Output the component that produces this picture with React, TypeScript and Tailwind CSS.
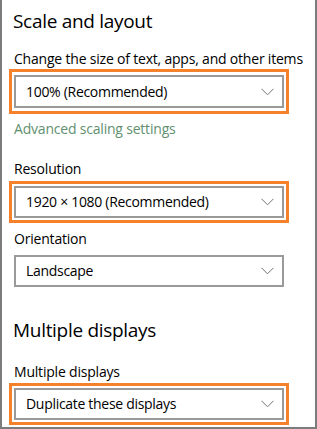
import React from "react";

function Chevron() {
  return (
    <svg width="13" height="8" viewBox="0 0 13 8" className="shrink-0">
      <path d="M0.5 0.8 L6.5 6.8 L12.5 0.8" fill="none" stroke="#737373" strokeWidth="1" />
    </svg>
  );
}

function Dropdown({ value, tall }: { value: string; tall?: boolean }) {
  return (
    <div
      className={`flex items-center justify-between w-[270px] border-2 border-[#9a9a9a] bg-white pl-[10px] pr-[8px] ${
        tall ? "h-[33px]" : "h-[32px]"
      }`}
    >
      <span className="text-[14px] leading-none tracking-[-0.3px] text-black">{value}</span>
      <Chevron />
    </div>
  );
}

function Highlight({ children, tall }: { children: React.ReactNode; tall?: boolean }) {
  return (
    <div className={`w-[280px] border-[3px] border-[#f5822a] px-[2px] ${tall ? "py-[3px]" : "py-[2px]"}`}>
      {children}
    </div>
  );
}

export default function App() {
  return (
    <div className="w-[317px] h-[429px] overflow-hidden bg-white border-l-2 border-r-2 border-b-2 border-[#7c7c7c] pl-[7px] font-['Open_Sans','Noto_Sans',sans-serif] text-black">
      <h2 className="mt-[7px] pl-[4px] text-[19px] leading-[28px] tracking-[-0.3px] font-normal">Scale and layout</h2>

      <p className="mt-[14px] pl-[5px] text-[14px] leading-[20px] tracking-[-0.2px]">
        Change the size of text, apps, and other items
      </p>
      <Highlight tall>
        <Dropdown value="100% (Recommended)" tall />
      </Highlight>

      <p className="mt-[5px] pl-[5px] text-[14px] leading-[20px] tracking-[-0.2px] text-[#62906f]">
        Advanced scaling settings
      </p>

      <p className="mt-[20px] pl-[5px] text-[14px] leading-[20px] tracking-[-0.2px]">Resolution</p>
      <div className="mt-[2px]">
        <Highlight>
          <Dropdown value="1920 × 1080 (Recommended)" />
        </Highlight>
      </div>

      <p className="mt-[6px] pl-[5px] text-[14px] leading-[20px] tracking-[-0.2px]">Orientation</p>
      <div className="mt-[6px] pl-[5px]">
        <Dropdown value="Landscape" />
      </div>

      <h2 className="mt-[29px] pl-[4px] text-[19px] leading-[28px] tracking-[-0.3px] font-normal">Multiple displays</h2>

      <p className="mt-[18px] pl-[5px] text-[14px] leading-[20px] tracking-[-0.2px]">Multiple displays</p>
      <div className="mt-[1px]">
        <Highlight>
          <Dropdown value="Duplicate these displays" />
        </Highlight>
      </div>
    </div>
  );
}
